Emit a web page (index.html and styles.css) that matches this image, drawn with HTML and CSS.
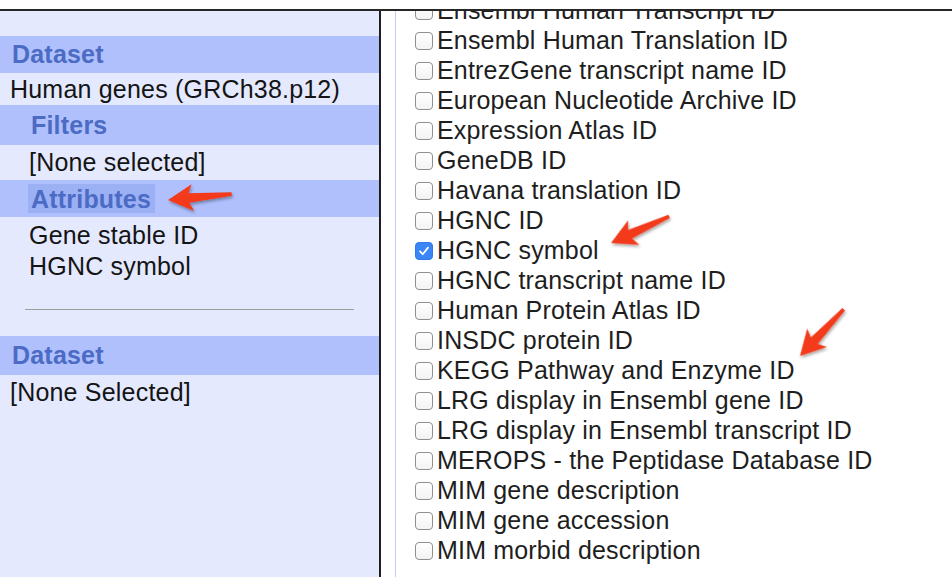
FILE: index.html
```html
<!DOCTYPE html>
<html lang="en">
<head>
<meta charset="utf-8">
<title>BioMart attributes</title>
<link rel="stylesheet" href="styles.css">
</head>
<body>
<div class="page">
  <div class="frame">
    <aside class="side">
      <div class="band"><span class="band-title">Dataset</span></div>
      <div class="item item-dataset">Human genes (GRCh38.p12)</div>
      <div class="band band-sub band-filters"><span class="band-title">Filters</span></div>
      <div class="item item-sub item-filters">[None selected]</div>
      <div class="band band-attrs"><span class="band-title band-active">Attributes</span></div>
      <div class="attr-list">
        <div class="attr">Gene stable ID</div>
        <div class="attr">HGNC symbol</div>
      </div>
      <hr class="divider">
      <div class="band band-second"><span class="band-title">Dataset</span></div>
      <div class="item item-none">[None Selected]</div>
    </aside>
    <main class="content">
      <div class="content-inner">
        <ul class="checklist">
          <li><input type="checkbox"><span>Ensembl Human Transcript ID</span></li>
          <li><input type="checkbox"><span>Ensembl Human Translation ID</span></li>
          <li><input type="checkbox"><span>EntrezGene transcript name ID</span></li>
          <li><input type="checkbox"><span>European Nucleotide Archive ID</span></li>
          <li><input type="checkbox"><span>Expression Atlas ID</span></li>
          <li><input type="checkbox"><span>GeneDB ID</span></li>
          <li><input type="checkbox"><span>Havana translation ID</span></li>
          <li><input type="checkbox"><span>HGNC ID</span></li>
          <li><input type="checkbox" checked><span>HGNC symbol</span></li>
          <li><input type="checkbox"><span>HGNC transcript name ID</span></li>
          <li><input type="checkbox"><span>Human Protein Atlas ID</span></li>
          <li><input type="checkbox"><span>INSDC protein ID</span></li>
          <li><input type="checkbox"><span>KEGG Pathway and Enzyme ID</span></li>
          <li><input type="checkbox"><span>LRG display in Ensembl gene ID</span></li>
          <li><input type="checkbox"><span>LRG display in Ensembl transcript ID</span></li>
          <li><input type="checkbox"><span>MEROPS - the Peptidase Database ID</span></li>
          <li><input type="checkbox"><span>MIM gene description</span></li>
          <li><input type="checkbox"><span>MIM gene accession</span></li>
          <li><input type="checkbox"><span>MIM morbid description</span></li>
        </ul>
      </div>
    </main>
  </div>
  <svg class="arrows" width="952" height="577" viewBox="0 0 952 577" aria-hidden="true">
    <defs>
      <filter id="shadow" x="-30%" y="-30%" width="160%" height="160%">
        <feDropShadow dx="1" dy="2" stdDeviation="1.6" flood-color="#000" flood-opacity="0.35"/>
      </filter>
      <path id="arrow" d="M -64 -1.8 L -21 -4.8 L -25 -13.5 L 0 0 L -25 13.5 L -21 4.8 L -64 1.8 Z"/>
    </defs>
    <g class="arrow-shape" filter="url(#shadow)">
      <use href="#arrow" transform="translate(168 200) rotate(174.6)"/>
      <use href="#arrow" transform="translate(611 243) rotate(155.4)"/>
      <use href="#arrow" transform="translate(800 356) rotate(133.1)"/>
    </g>
  </svg>
</div>
</body>
</html>
```

FILE: styles.css
```css
html, body {
  margin: 0;
  padding: 0;
  background: #ffffff;
}

body {
  font-family: "Liberation Sans", Arial, Helvetica, sans-serif;
  color: #141414;
}

.page {
  position: relative;
  width: 952px;
  height: 577px;
  overflow: hidden;
  padding-top: 9px;
  box-sizing: border-box;
}

.frame {
  display: flex;
  height: 568px;
  border-top: 2px solid #262626;
}

/* ---------- left panel ---------- */
.side {
  width: 379px;
  flex: none;
  background: #e4e9fe;
  border-right: 2px solid #1e1e1e;
  padding-top: 25px;
  font-size: 25px;
  letter-spacing: 0.2px;
  box-sizing: content-box;
}

.band {
  background: #afc0fc;
  height: 37px;
  display: flex;
  align-items: center;
  padding-left: 12px;
}

.band-title {
  font-weight: bold;
  color: #4b6bc4;
}

.band-sub {
  padding-left: 31px;
}

.band-filters {
  height: 40px;
}

.band-attrs {
  padding-left: 28px;
}

.band-title.band-active {
  background: #9cb1f4;
  padding: 2px 4px 1px 3px;
  line-height: 26px;
}

.band-second {
  height: 39px;
}

.item {
  display: flex;
  align-items: center;
  padding-left: 10px;
  height: 32px;
}

.item-sub {
  padding-left: 29px;
}

.item-filters {
  height: 35px;
}

.item-none {
  padding-left: 10px;
  height: 34px;
}

.attr-list {
  padding-top: 3px;
  padding-left: 29px;
}

.attr {
  height: 31px;
  line-height: 31px;
}

.divider {
  border: 0;
  border-top: 1px solid #9d9d9d;
  margin: 27px 25px 26px 25px;
  height: 0;
}

/* ---------- right panel ---------- */
.content {
  flex: 1;
  background: #ffffff;
  padding-left: 14px;
  overflow: hidden;
}

.content-inner {
  height: 100%;
  border-left: 1px solid #c3cdf8;
  padding-left: 19px;
  overflow: hidden;
}

.checklist {
  list-style: none;
  margin: -16px 0 0 0;
  padding: 0;
  font-size: 25px;
  letter-spacing: 0.18px;
  color: #1e1e1e;
}

.checklist li {
  display: flex;
  align-items: center;
  height: 30px;
  white-space: nowrap;
}

.checklist input {
  -webkit-appearance: none;
  appearance: none;
  width: 18px;
  height: 18px;
  margin: 2px 4px 0 0;
  flex: none;
  border: 1px solid #8f8f8f;
  border-radius: 4px;
  background: linear-gradient(#ffffff, #f3f3f3);
  box-sizing: border-box;
}

.checklist input:checked {
  border-color: #2f78ee;
  background-color: #3b86f7;
  background-image: url("data:image/svg+xml;utf8,<svg xmlns='http://www.w3.org/2000/svg' viewBox='0 0 18 18'><path d='M4.5 9.5 L7.6 12.6 L13.5 5.2' fill='none' stroke='white' stroke-width='2' stroke-linecap='round' stroke-linejoin='round'/></svg>");
  background-repeat: no-repeat;
  background-size: 100% 100%;
}

/* ---------- annotation arrows ---------- */
.arrows {
  position: absolute;
  left: 0;
  top: 0;
  pointer-events: none;
}

.arrow-shape {
  fill: #f33a1c;
}
```
